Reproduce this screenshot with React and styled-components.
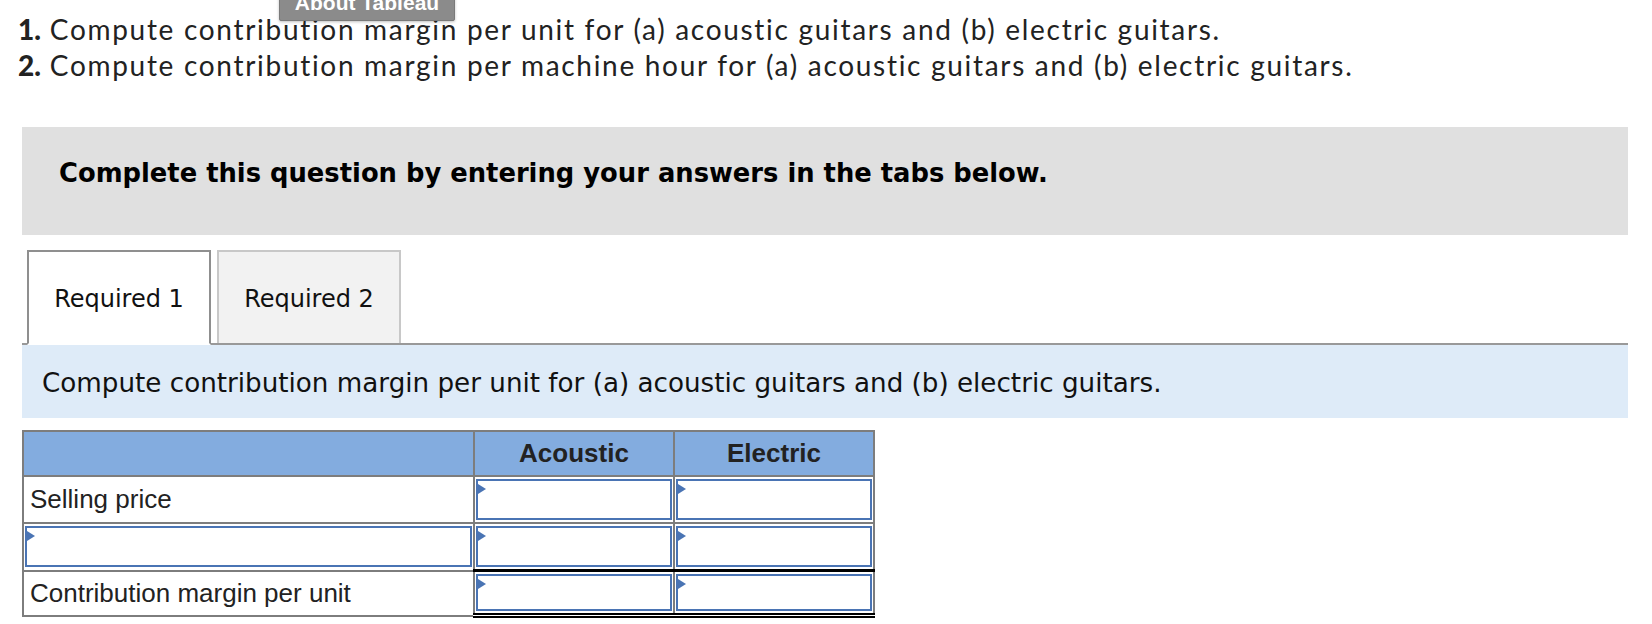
import styled, { createGlobalStyle } from 'styled-components';

const GlobalStyle = createGlobalStyle`
  html, body {
    margin: 0;
    padding: 0;
    background: #fff;
  }
`;

const Page = styled.div`
  position: relative;
  width: 1652px;
  box-sizing: border-box;
  padding: 0 24px 0 22px;
  overflow: hidden;
`;

const Tooltip = styled.div`
  position: absolute;
  left: 279px;
  top: -10px;
  width: 176px;
  height: 31px;
  box-sizing: border-box;
  background: #8b8b8b;
  border: 1px solid #7a7a7a;
  border-radius: 2px;
  box-shadow: 0 1px 3px rgba(0, 0, 0, 0.25);
  color: #fff;
  font: bold 21px "Liberation Sans", Arial, sans-serif;
  text-align: center;
  line-height: 24px;
`;

const Instructions = styled.div`
  padding-top: 11px;
  margin-left: -4px;
  font-family: Lato, "Open Sans", sans-serif;
  font-size: 28px;
  letter-spacing: 1.7px;
  line-height: 36px;
  color: #222;
`;

const Line = styled.div`
  white-space: nowrap;

  b {
    font-weight: 900;
    letter-spacing: 0;
  }
`;

const Banner = styled.div`
  margin-top: 44px;
  height: 108px;
  box-sizing: border-box;
  padding: 31px 0 0 37px;
  background: #e0e0e0;
  font: bold 25.8px "DejaVu Sans", Verdana, sans-serif;
  line-height: 30px;
  color: #000;
`;

const TabBar = styled.div`
  margin-top: 15px;
  padding-left: 5px;
  display: flex;
  gap: 6px;
  border-bottom: 2px solid #999;
`;

const Tab = styled.div`
  width: 184px;
  box-sizing: border-box;
  display: flex;
  align-items: center;
  justify-content: center;
  padding-top: 3px;
  font: 24px "DejaVu Sans", Verdana, sans-serif;
  color: #111;
  background: ${(p) => (p.$active ? '#fff' : '#f2f2f2')};
  border: 2px solid ${(p) => (p.$active ? '#8f8f8f' : '#c8c8c8')};
  border-bottom: ${(p) => (p.$active ? '2px solid #fff' : 'none')};
  margin-bottom: ${(p) => (p.$active ? '-2px' : '0')};
  height: ${(p) => (p.$active ? '95px' : '93px')};
`;

const Prompt = styled.div`
  height: 73px;
  box-sizing: border-box;
  display: flex;
  align-items: center;
  padding: 2px 0 0 20px;
  background: #deebf8;
  font: 26.2px "DejaVu Sans", Verdana, sans-serif;
  color: #111;
`;

const Table = styled.table`
  margin-top: 12px;
  border-collapse: collapse;
  table-layout: fixed;
  width: 851px;
  font-family: "Liberation Sans", Arial, sans-serif;
  font-size: 26px;
  color: #222;
`;

const HeadCell = styled.th`
  height: 43px;
  padding: 0;
  background: #83acdf;
  border: 2px solid #7d7d7d;
  font-weight: bold;
  text-align: center;
  color: #222;
`;

const LabelCell = styled.td`
  height: 43px;
  padding: 0 0 0 6px;
  border: 2px solid #7d7d7d;
  white-space: nowrap;
`;

const InputCell = styled.td`
  height: 43px;
  padding: 1px;
  border: 2px solid #7d7d7d;
  ${(p) => p.$total && 'height: 37px; border-top: 3px solid #000; border-bottom: 5px double #000;'}
`;

const InputBox = styled.div`
  position: relative;
  height: ${(p) => (p.$total ? '33px' : '37px')};
  border: 2px solid #4a74b4;
  background: #fff;

  &::before {
    content: '';
    position: absolute;
    left: 0;
    top: 3px;
    border-top: 5px solid transparent;
    border-bottom: 5px solid transparent;
    border-left: 8px solid #4a74b4;
  }
`;

export default function App() {
  return (
    <>
      <GlobalStyle />
      <Page>
        <Tooltip>About Tableau</Tooltip>
        <Instructions>
          <Line>
            <b>1.</b> Compute contribution margin per unit for (a) acoustic guitars and (b) electric guitars.
          </Line>
          <Line>
            <b>2.</b> Compute contribution margin per machine hour for (a) acoustic guitars and (b) electric guitars.
          </Line>
        </Instructions>
        <Banner>Complete this question by entering your answers in the tabs below.</Banner>
        <TabBar>
          <Tab $active>Required 1</Tab>
          <Tab>Required 2</Tab>
        </TabBar>
        <Prompt>Compute contribution margin per unit for (a) acoustic guitars and (b) electric guitars.</Prompt>
        <Table>
          <colgroup>
            <col style={{ width: 451 }} />
            <col style={{ width: 200 }} />
            <col style={{ width: 200 }} />
          </colgroup>
          <thead>
            <tr>
              <HeadCell />
              <HeadCell>Acoustic</HeadCell>
              <HeadCell>Electric</HeadCell>
            </tr>
          </thead>
          <tbody>
            <tr>
              <LabelCell>Selling price</LabelCell>
              <InputCell><InputBox /></InputCell>
              <InputCell><InputBox /></InputCell>
            </tr>
            <tr>
              <InputCell><InputBox /></InputCell>
              <InputCell><InputBox /></InputCell>
              <InputCell><InputBox /></InputCell>
            </tr>
            <tr>
              <LabelCell>Contribution margin per unit</LabelCell>
              <InputCell $total><InputBox $total /></InputCell>
              <InputCell $total><InputBox $total /></InputCell>
            </tr>
          </tbody>
        </Table>
      </Page>
    </>
  );
}
